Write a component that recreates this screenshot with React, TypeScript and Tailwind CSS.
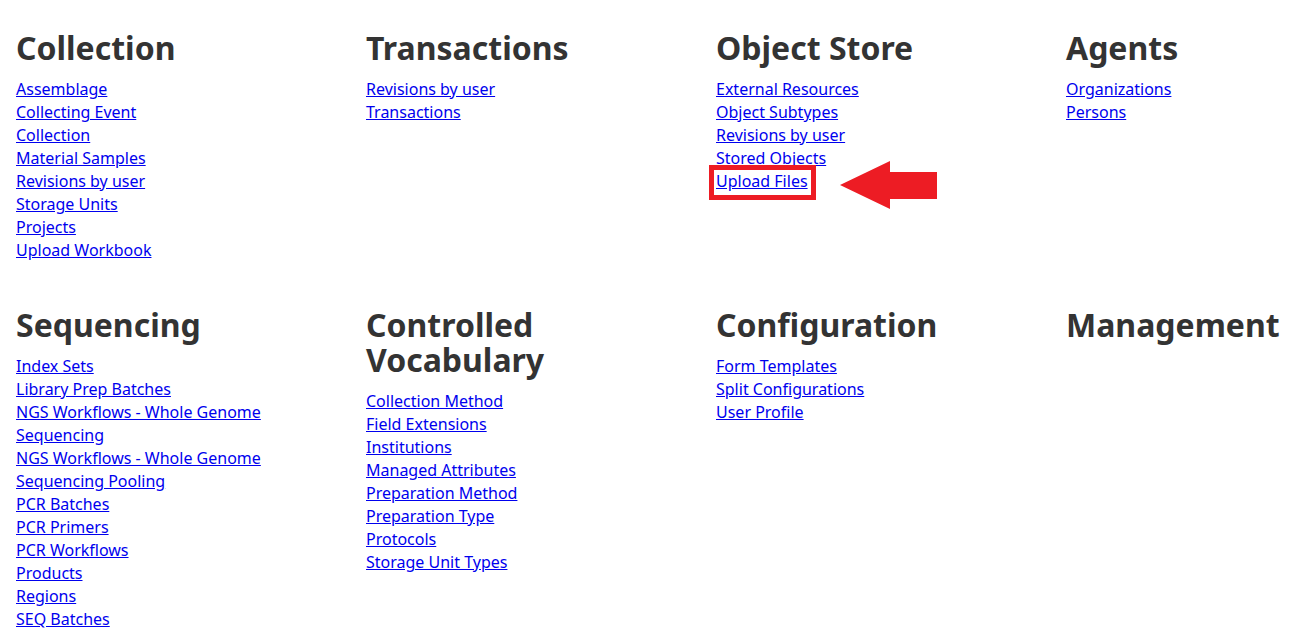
const sections: { title: string; links: string[] }[] = [
  {
    title: 'Collection',
    links: [
      'Assemblage',
      'Collecting Event',
      'Collection',
      'Material Samples',
      'Revisions by user',
      'Storage Units',
      'Projects',
      'Upload Workbook',
    ],
  },
  { title: 'Transactions', links: ['Revisions by user', 'Transactions'] },
  {
    title: 'Object Store',
    links: ['External Resources', 'Object Subtypes', 'Revisions by user', 'Stored Objects', 'Upload Files'],
  },
  { title: 'Agents', links: ['Organizations', 'Persons'] },
  {
    title: 'Sequencing',
    links: [
      'Index Sets',
      'Library Prep Batches',
      'NGS Workflows - Whole Genome',
      'Sequencing',
      'NGS Workflows - Whole Genome',
      'Sequencing Pooling',
      'PCR Batches',
      'PCR Primers',
      'PCR Workflows',
      'Products',
      'Regions',
      'SEQ Batches',
    ],
  },
  {
    title: 'Controlled Vocabulary',
    links: [
      'Collection Method',
      'Field Extensions',
      'Institutions',
      'Managed Attributes',
      'Preparation Method',
      'Preparation Type',
      'Protocols',
      'Storage Unit Types',
    ],
  },
  { title: 'Configuration', links: ['Form Templates', 'Split Configurations', 'User Profile'] },
  { title: 'Management', links: [] },
];

// red box + arrow pointing at the link
function Highlight() {
  return (
    <>
      <div className="absolute -left-[7.5px] -top-[5px] w-[107px] h-[35px] border-[5px] border-[#ed1c24] pointer-events-none" />
      <svg
        className="absolute left-[124px] -top-[9px] pointer-events-none"
        width="98"
        height="49"
        viewBox="0 0 98 49"
      >
        <path d="M0 24 Q25 12 50 0 L50 11 L97 11 L97 38 L50 38 L50 48 Q25 36 0 24 Z" fill="#ed1c24" />
      </svg>
    </>
  );
}

export default function App() {
  return (
    <div
      className="min-h-screen bg-white text-[#333] px-4 pt-[30px]"
      style={{ fontFamily: '"Noto Sans", sans-serif' }}
    >
      <div className="grid grid-cols-[350px_350px_350px_1fr] gap-y-[45px]">
        {sections.map((s) => (
          <div key={s.title} className="pr-4">
            <h2 className="text-[32px] font-bold leading-[35px] mb-[13px] text-[#333]">{s.title}</h2>
            <ul>
              {s.links.map((l, i) => (
                <li key={i} className="text-base leading-[23px]">
                  <span className="relative inline-block">
                    <a href="#" className="text-[#0000ee] underline">
                      {l}
                    </a>
                    {s.title === 'Object Store' && l === 'Upload Files' && <Highlight />}
                  </span>
                </li>
              ))}
            </ul>
          </div>
        ))}
      </div>
    </div>
  );
}
